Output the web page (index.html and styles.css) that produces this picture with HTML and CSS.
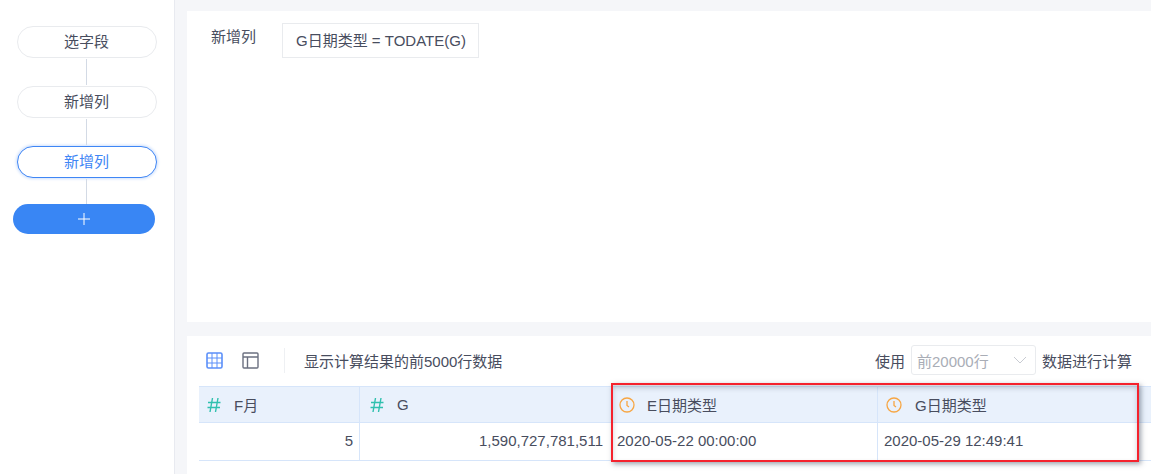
FILE: index.html
```html
<!DOCTYPE html>
<html lang="en">

<head>
  <meta charset="UTF-8" />
  <title>新增列</title>
  <link rel="stylesheet" href="styles.css">
</head>

<body>
  <!-- Steps -->
  <div class="sidebar">
    <div class="step">选字段</div>
    <div class="line"></div>
    <div class="step">新增列</div>
    <div class="line"></div>
    <div class="step active">新增列</div>
    <div class="line last"></div>
    <div class="add">
      <svg width="12" height="12" viewBox="0 0 12 12"><path d="M6 0v12M0 6h12" stroke="#fff" stroke-width="1" fill="none" /></svg>
    </div>
  </div>

  <div class="main">
    <!-- Formula -->
    <div class="panel-top">
      <div class="label">新增列</div>
      <div class="formula">G日期类型 = TODATE(G)</div>
    </div>

    <!-- Preview -->
    <div class="panel-bottom">
      <div class="toolbar">
        <svg class="tool" width="17" height="17" viewBox="0 0 17 17" fill="none" stroke="#5b8ff9" stroke-width="1">
          <rect x="1" y="1" width="15" height="15" rx="1.500" stroke-width="1.600" />
          <path d="M6 1v15M11 1v15M1 6h15M1 11h15" />
        </svg>
        <svg class="tool" width="17" height="17" viewBox="0 0 17 17" fill="none" stroke="#6b7080" stroke-width="1.400">
          <rect x="1" y="1" width="15" height="15" rx="1" />
          <path d="M1 5h15M5.500 5v11" />
        </svg>
        <div class="divider"></div>
        <div class="hint">显示计算结果的前5000行数据</div>
        <div class="use">
          <span>使用</span>
          <div class="select">
            <span>前20000行</span>
            <svg width="14" height="8" viewBox="0 0 14 8" fill="none" stroke="#c8cbd2" stroke-width="1"><path d="M1 1l6 6 6-6" /></svg>
          </div>
          <span>数据进行计算</span>
        </div>
      </div>

      <div class="table">
        <div class="row head">
          <div class="cell c1">
            <svg class="hash" width="14" height="16" viewBox="0 0 14 16" fill="none" stroke="#2fc0ae" stroke-width="1.400"><path d="M5.500 1L3 15M11 1L8.500 15M1 5.500h12.500M0.500 10.500h12.500" /></svg>
            F月
          </div>
          <div class="cell c2">
            <svg class="hash" width="14" height="16" viewBox="0 0 14 16" fill="none" stroke="#2fc0ae" stroke-width="1.400"><path d="M5.500 1L3 15M11 1L8.500 15M1 5.500h12.500M0.500 10.500h12.500" /></svg>
            G
          </div>
          <div class="cell c3">
            <svg class="clock" width="16" height="16" viewBox="0 0 16 16" fill="none" stroke="#f7a644" stroke-width="1.300"><circle cx="8" cy="8" r="7" /><path d="M8 4v4.500l2 1.500" /></svg>
            E日期类型
          </div>
          <div class="cell c4">
            <svg class="clock" width="16" height="16" viewBox="0 0 16 16" fill="none" stroke="#f7a644" stroke-width="1.300"><circle cx="8" cy="8" r="7" /><path d="M8 4v4.500l2 1.500" /></svg>
            G日期类型
          </div>
        </div>
        <div class="row body">
          <div class="cell c1 num">5</div>
          <div class="cell c2 num">1,590,727,781,511</div>
          <div class="cell c3">2020-05-22 00:00:00</div>
          <div class="cell c4">2020-05-29 12:49:41</div>
        </div>
      </div>
    </div>
  </div>

  <!-- Red highlight on top of the screenshot -->
  <div class="highlight"></div>
</body>

</html>
```

FILE: styles.css
```css
* {
  margin: 0;
  padding: 0;
  box-sizing: border-box;
}

body {
  width: 1151px;
  height: 474px;
  display: flex;
  overflow: hidden;
  position: relative;
  background-color: #f5f6f9;
  color: #484d5e;
  font-family: "Liberation Sans", "Noto Sans CJK SC", sans-serif;
  font-size: 15px;
}

/* Sidebar */
.sidebar {
  width: 175px;
  flex-shrink: 0;
  display: flex;
  flex-direction: column;
  align-items: center;
  padding: 26px 1px 0 0;
  background-color: #fff;
  border-right: 1px solid #e8eaf0;
}

.step {
  width: 140px;
  height: 32px;
  padding-bottom: 2px;
  line-height: 29px;
  text-align: center;
  background-color: #fff;
  border: 1px solid #e9ebee;
  border-radius: 16px;
}

.step.active {
  color: #3f86f5;
  border-color: #3f86f5;
  box-shadow: 0 0 3px 1px #cfe0fc;
}

.line {
  width: 1px;
  height: 26px;
  margin: 1px 0;
  background-color: #d3dae5;
}

.line.last {
  height: 25px;
  margin-bottom: 0;
}

.add {
  width: 142px;
  height: 30px;
  margin-left: -5px;
  display: flex;
  align-items: center;
  justify-content: center;
  background-color: #3986f4;
  border-radius: 15px;
}

/* Main */
.main {
  flex: 1;
  display: flex;
  flex-direction: column;
  gap: 14px;
  padding: 11px 0 0 12px;
}

.panel-top {
  height: 311px;
  display: flex;
  align-items: flex-start;
  padding: 12px 0 0 24px;
  background-color: #fff;
}

.label {
  width: 71px;
  line-height: 28px;
}

.formula {
  height: 35px;
  line-height: 33px;
  padding: 0 12px 0 13px;
  border: 1px solid #e9ebee;
}

.panel-bottom {
  flex: 1;
  padding-left: 12px;
  background-color: #fff;
}

.toolbar {
  height: 50px;
  display: flex;
  align-items: center;
  padding: 0 19px 2px 7px;
}

.tool {
  margin-right: 19px;
}

.divider {
  width: 1px;
  height: 25px;
  margin-left: 6px;
  margin-right: 19px;
  background-color: #eef0f3;
}

.use {
  margin-left: auto;
  display: flex;
  align-items: center;
  gap: 6px;
}

.select {
  width: 125px;
  height: 30px;
  display: flex;
  align-items: center;
  justify-content: space-between;
  padding: 0 8px 0 5px;
  color: #a9adb6;
  border: 1px solid #e9ebee;
  border-radius: 3px;
}

/* Table */
.table {
  border-top: 1px solid #d6e5fa;
}

.row {
  display: flex;
  border-bottom: 1px solid #d6e5fa;
}

.row.head {
  height: 36px;
  background-color: #e9f1fc;
}

.row.body {
  height: 38px;
}

.cell {
  display: flex;
  align-items: center;
  padding: 0 6px;
  border-right: 1px solid #d6e5fa;
}

.body .cell {
  padding-bottom: 2px;
}

.c1 {
  width: 161px;
}

.c2 {
  width: 252px;
}

.c3 {
  width: 266px;
}

.c4 {
  flex: 1;
  border-right: none;
}

.body .c2 {
  padding-right: 8px;
}

.body .c3 {
  padding-left: 5px;
}

.num {
  justify-content: flex-end;
}

.hash {
  margin: 0 13px 0 2px;
}

.head .c2 {
  padding-left: 8px;
}

.clock {
  margin: 0 12px 0 1px;
}

.head .c4 {
  padding-left: 7px;
}

.head .c4 .clock {
  margin-right: 13px;
}

/* Red box */
.highlight {
  position: absolute;
  left: 611px;
  top: 383px;
  width: 528px;
  height: 79px;
  border: 2px solid #f5222d;
  box-shadow: 2px 2px 5px rgba(60, 70, 90, 0.5), inset 0 3px 5px rgba(60, 70, 90, 0.25);
}
```
